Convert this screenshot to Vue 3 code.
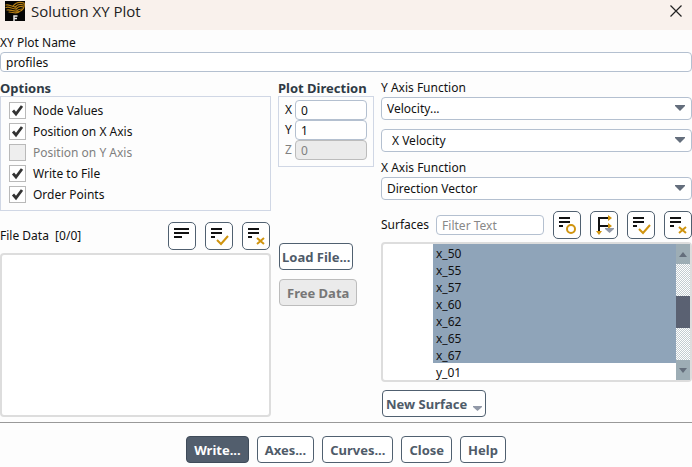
<script setup>
import { ref, reactive } from 'vue'

const plotName = ref('profiles')
const options = reactive([
  { label: 'Node Values', checked: true },
  { label: 'Position on X Axis', checked: true },
  { label: 'Position on Y Axis', checked: false, disabled: true },
  { label: 'Write to File', checked: true },
  { label: 'Order Points', checked: true },
])
const direction = reactive([
  { axis: 'X', value: '0' },
  { axis: 'Y', value: '1' },
  { axis: 'Z', value: '0', disabled: true },
])
const filter = ref('')
const surfaces = reactive([
  { name: 'x_50', selected: true },
  { name: 'x_55', selected: true },
  { name: 'x_57', selected: true },
  { name: 'x_60', selected: true },
  { name: 'x_62', selected: true },
  { name: 'x_65', selected: true },
  { name: 'x_67', selected: true },
  { name: 'y_01', selected: false },
])
const setAll = (value) => surfaces.forEach((s) => { s.selected = value })
</script>

<template>
  <div class="dialog">
    <header class="titlebar">
      <svg class="logo" viewBox="0 0 20 20" aria-hidden="true">
        <rect width="20" height="20" fill="#050505" />
        <g fill="none" stroke="#b98014" stroke-width="1.2" stroke-linecap="round">
          <path d="M1 4C4 3 7 6 11 6" />
          <path d="M1 6.500C4 5 7 8 11 8" />
          <path d="M2 9C5 8 8 11 13 10" />
          <path d="M4 11C8 11 10 13 14 11" />
          <path d="M8 5C11 1 16 1 19 2C20 6 18 10 13 11" />
          <path d="M10 6C13 3 16 3 18 4" />
          <path d="M11 8C14 5 16 5 18 6" />
          <path d="M12 9.500C14 8 16 8 17 8" />
        </g>
        <path d="M9 20V15H12.500M9 17.500H12" fill="none" stroke="#e8e8e8" stroke-width="1.5" />
      </svg>
      <h1>Solution XY Plot</h1>
      <button class="close" type="button" aria-label="Close window">
        <svg viewBox="0 0 12 12"><path d="M.5 .5L11.500 11.500M11.500 .5L.5 11.500" fill="none" stroke="#222" stroke-width="1.200" /></svg>
      </button>
    </header>

    <div class="name">
      <label for="plot-name">XY Plot Name</label>
      <input id="plot-name" v-model="plotName" class="field" type="text">
    </div>

    <main class="columns">
      <section class="left">
        <h2 id="options-title">Options</h2>
        <div class="options" role="group" aria-labelledby="options-title">
          <label v-for="o in options" :key="o.label" :class="{ off: o.disabled }">
            <input v-model="o.checked" type="checkbox" :disabled="o.disabled">
            <span>{{ o.label }}</span>
          </label>
        </div>
        <div class="toolrow file-tools">
          <span class="grow">File Data&nbsp; [0/0]</span>
          <button class="tool" type="button" aria-label="Toggle list">
            <svg viewBox="0 0 26 26"><path d="M5 6H20M5 10H20M5 14H13" class="ink" /></svg>
          </button>
          <button class="tool" type="button" aria-label="Select all files">
            <svg viewBox="0 0 26 26"><path d="M5 6H16M5 10H16M5 14H9" class="ink" /><path d="M11 17L15 21L22 13" class="gold" /></svg>
          </button>
          <button class="tool" type="button" aria-label="Deselect all files">
            <svg viewBox="0 0 26 26"><path d="M5 6H16M5 10H16M5 14H9" class="ink" /><path d="M14 15L21 21M21 15L14 21" class="gold" /></svg>
          </button>
        </div>
        <div class="list file-list" role="listbox" aria-label="File Data"></div>
      </section>

      <section class="middle">
        <h2>Plot Direction</h2>
        <div class="direction">
          <label v-for="d in direction" :key="d.axis" :class="{ off: d.disabled }">
            <span>{{ d.axis }}</span>
            <input v-model="d.value" class="field" type="text" :disabled="d.disabled">
          </label>
        </div>
        <div class="file-actions">
          <button class="btn" type="button">Load File...</button>
          <button class="btn" type="button" disabled>Free Data</button>
        </div>
      </section>

      <section class="right">
        <label for="y-function">Y Axis Function</label>
        <div class="select">
          <select id="y-function"><option>Velocity...</option></select>
          <svg viewBox="0 0 10 6"><path d="M0 0H10V1L5 6L0 1Z" /></svg>
        </div>
        <div class="select nested">
          <select aria-label="Y axis component"><option>X Velocity</option></select>
          <svg viewBox="0 0 10 6"><path d="M0 0H10V1L5 6L0 1Z" /></svg>
        </div>
        <label class="x-label" for="x-function">X Axis Function</label>
        <div class="select">
          <select id="x-function"><option>Direction Vector</option></select>
          <svg viewBox="0 0 10 6"><path d="M0 0H10V1L5 6L0 1Z" /></svg>
        </div>

        <div class="toolrow surface-tools">
          <label for="filter">Surfaces</label>
          <input id="filter" v-model="filter" class="field grow" type="text" placeholder="Filter Text">
          <button class="tool" type="button" aria-label="Match surfaces">
            <svg viewBox="0 0 26 26"><path d="M5 6H16M5 10H16M5 14H9" class="ink" /><circle cx="17" cy="17" r="4" class="gold" /></svg>
          </button>
          <button class="tool" type="button" aria-label="Group surfaces">
            <svg viewBox="0 0 26 26">
              <path d="M8 20V6H18M8 14H18" class="ink" />
              <path d="M17 3L21 6L17 9ZM17 11L21 14L17 17ZM5 19H11L8 23Z" fill="#d0940f" />
              <path d="M14 16H23V17L18.500 21L14 17Z" fill="#9299a8" />
            </svg>
          </button>
          <button class="tool" type="button" aria-label="Select all surfaces" @click="setAll(true)">
            <svg viewBox="0 0 26 26"><path d="M5 6H16M5 10H16M5 14H9" class="ink" /><path d="M11 17L15 21L22 13" class="gold" /></svg>
          </button>
          <button class="tool" type="button" aria-label="Deselect all surfaces" @click="setAll(false)">
            <svg viewBox="0 0 26 26"><path d="M5 6H16M5 10H16M5 14H9" class="ink" /><path d="M14 15L21 21M21 15L14 21" class="gold" /></svg>
          </button>
        </div>

        <div class="list surface-list">
          <ul role="listbox" aria-label="Surfaces" aria-multiselectable="true">
            <li
              v-for="s in surfaces" :key="s.name" role="option"
              :aria-selected="s.selected" :class="{ selected: s.selected }"
              @click="s.selected = !s.selected"
            >{{ s.name }}</li>
          </ul>
          <div class="scrollbar">
            <button type="button" aria-label="Scroll up"><svg viewBox="0 0 8 5"><path d="M0 5L4 0L8 5Z" /></svg></button>
            <div class="track"><div class="thumb"></div></div>
            <button type="button" aria-label="Scroll down"><svg viewBox="0 0 8 5"><path d="M0 0L4 5L8 0Z" /></svg></button>
          </div>
        </div>
        <button class="btn new-surface" type="button">
          New Surface
          <svg viewBox="0 0 9 5"><path d="M0 0H9V1L4.500 5L0 1Z" /></svg>
        </button>
      </section>
    </main>

    <footer class="footer">
      <button class="btn primary" type="button">Write...</button>
      <button class="btn" type="button">Axes...</button>
      <button class="btn" type="button">Curves...</button>
      <button class="btn" type="button">Close</button>
      <button class="btn" type="button">Help</button>
    </footer>
  </div>
</template>

<style>
body {
  margin: 0;
  background: #fdfdfd;
}
</style>

<style scoped>
.dialog,
.dialog * {
  box-sizing: border-box;
}
.dialog {
  color: #111;
  font: 12px/16px "Noto Sans", "Open Sans", sans-serif;
}
input,
select,
button {
  margin: 0;
  color: inherit;
  font: inherit;
}
svg {
  display: block;
}
.titlebar {
  display: flex;
  align-items: center;
  height: 30px;
  padding: 0 10px 8px 5px;
  background: #f9f1ec;
}
.logo {
  width: 20px;
  height: 20px;
}
h1 {
  flex: 1;
  margin: 0 0 0 6px;
  color: #222;
  font: 400 15px/20px "Open Sans", sans-serif;
}
.close {
  padding: 0;
  border: 0;
  background: none;
}
.close svg {
  width: 12px;
  height: 12px;
}
.name {
  display: flex;
  flex-direction: column;
  gap: 1px;
  padding-top: 5px;
}
.field {
  width: 100%;
  min-width: 0;
  height: 20px;
  padding: 0 5px;
  border: 1px solid #b4c0d0;
  border-radius: 4px;
  background: #fff;
}
.columns {
  display: grid;
  grid-template-columns: minmax(0, 271fr) 96px minmax(0, 311fr);
  gap: 7px;
  padding: 8px 0 5px;
}
.columns > section {
  display: flex;
  flex-direction: column;
}
h2 {
  margin: 0;
  color: #2f3a45;
  font-size: 13px;
  line-height: 16px;
  white-space: nowrap;
}
.options {
  display: flex;
  flex-direction: column;
  gap: 4px;
  height: 115px;
  padding: 5px 8px;
  border: 1px solid #d0d7e5;
}
.options label {
  display: flex;
  align-items: center;
  gap: 7px;
  height: 17px;
}
.options input {
  width: 17px;
  height: 17px;
  border: 1px solid #b9b9b9;
  background: #fff;
  appearance: none;
}
.options input:checked {
  background: #fff url("data:image/svg+xml,%3Csvg xmlns='http://www.w3.org/2000/svg' viewBox='0 0 15 15'%3E%3Cpath d='M3 7.500L6 11L12 3' fill='none' stroke='%23333' stroke-width='2.800'/%3E%3C/svg%3E");
}
.options input:disabled {
  background: #eee;
}
.off {
  color: #808080;
}
.toolrow {
  display: flex;
  align-items: center;
  gap: 9px;
}
.grow {
  flex: 1;
}
.file-tools {
  padding: 11px 1px 3px 0;
}
.tool {
  flex: none;
  width: 28px;
  height: 28px;
  padding: 0;
  border: 1px solid #506070;
  border-radius: 5px;
  background: #fff;
}
.tool svg {
  width: 26px;
  height: 26px;
}
.ink {
  fill: none;
  stroke: #111;
  stroke-width: 2;
}
.gold {
  fill: none;
  stroke: #d0940f;
  stroke-width: 2;
}
.list {
  border: 2px solid #ddd;
  border-radius: 4px;
  background: #fff;
}
.file-list {
  flex: 1;
}
.direction {
  height: 71px;
  padding: 3px 6px;
  border: 1px solid #d0d7e5;
}
.direction label {
  display: flex;
  align-items: center;
  gap: 2px;
}
.direction span {
  flex: none;
  width: 8px;
}
.field:disabled {
  border-color: #bcbcbc;
  background: #ebebeb;
  color: #808080;
}
.file-actions {
  display: flex;
  flex-direction: column;
  align-items: flex-start;
  gap: 9px;
  padding: 76px 0 0 1px;
}
.btn {
  height: 27px;
  padding: 0 7px;
  border: 1px solid #506070;
  border-radius: 4px;
  background: #fff;
  color: #4f5b69;
  font-size: 13px;
  font-weight: 700;
  white-space: nowrap;
}
.file-actions .btn {
  padding: 0 2px;
}
.file-actions .btn:disabled {
  padding: 0 7px;
  border-color: #bcbcbc;
  background: #ebebeb;
  color: #777;
}
.select {
  position: relative;
  margin-top: 1px;
}
.select select {
  display: block;
  width: 100%;
  height: 23px;
  padding: 0 24px 0 5px;
  border: 1px solid #b4c0d0;
  border-radius: 4px;
  background: #fff;
  appearance: none;
}
.select svg {
  position: absolute;
  top: 8px;
  right: 7px;
  width: 10px;
  height: 6px;
  fill: #646e7c;
  pointer-events: none;
}
.nested {
  margin-top: 9px;
}
.nested select {
  padding-left: 10px;
}
.x-label {
  margin-top: 8px;
}
.surface-tools {
  padding: 11px 0 3px;
}
.surface-tools label {
  margin-right: -2px;
}
.field::placeholder {
  color: #888;
  opacity: 1;
}
.surface-list {
  display: flex;
}
.surface-list ul {
  flex: 1;
  margin: 0;
  padding: 0 0 0 50px;
  list-style: none;
}
.surface-list li {
  height: 17px;
  padding-left: 3px;
  line-height: 20px;
}
.selected {
  background: #8fa4b9;
}
.scrollbar {
  display: flex;
  flex-direction: column;
  width: 14px;
}
.scrollbar button {
  display: flex;
  align-items: center;
  justify-content: center;
  height: 20px;
  padding: 0;
  border: 0;
  background: #9dadb5;
}
.scrollbar svg {
  width: 8px;
  height: 5px;
  fill: #646e7c;
}
.track {
  flex: 1;
  padding-top: 32px;
  background: repeating-conic-gradient(#c3ccd1 0 25%, #fff 0 50%) 0 0 / 2px 2px;
}
.thumb {
  height: 32px;
  background: #5a6172;
}
.new-surface {
  display: flex;
  align-items: center;
  align-self: flex-start;
  gap: 6px;
  margin: 8px 0 0 1px;
  padding: 0 3px;
}
.new-surface svg {
  width: 9px;
  height: 5px;
  margin-top: 9px;
  fill: #9299a8;
}
.footer {
  display: flex;
  justify-content: center;
  gap: 8px;
  padding: 13px 0 4px;
  border-top: 1px solid #999;
}
.primary {
  border-color: #3f4b59;
  background: #525e6d;
  color: #fff;
}
</style>
